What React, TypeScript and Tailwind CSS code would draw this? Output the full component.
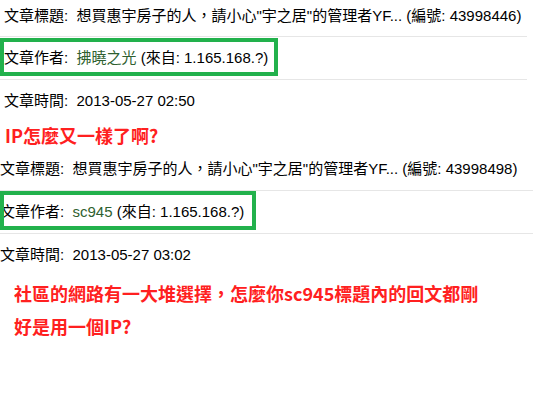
import React from "react";

const font = { fontFamily: '"Liberation Sans", "Noto Sans CJK TC", sans-serif' };

function Block({
  id,
  author,
  time,
  pad,
  width,
  boxW,
  boxTop,
  boxH,
  first,
}: {
  id: string;
  author: string;
  time: string;
  pad: string;
  width: string;
  boxW: string;
  boxTop: string;
  boxH: string;
  first: boolean;
}) {
  return (
    <div className={width}>
      <div
        className={`flex items-center border-b border-[#e6e6e6] ${pad} ${
          first ? "h-[37px] pb-1" : "h-[43px]"
        }`}
      >
        <span>
          文章標題:{"\u00a0\u00a0"}想買惠宇房子的人，請小心"宇之居"的管理者YF... (編號: {id})
        </span>
      </div>
      <div className={`relative flex h-[43px] items-center border-b border-[#e6e6e6] ${pad}`}>
        <span>
          文章作者:{"\u00a0\u00a0"}
          <span className="text-[#2f5f2f]">{author}</span> (來自: 1.165.168.?)
        </span>
        <div
          className={`pointer-events-none absolute left-0 border-4 border-[#22b14c] ${boxW} ${boxTop} ${boxH}`}
        />
      </div>
      <div className={`flex h-[43px] items-center ${pad}`}>
        <span>文章時間:{"\u00a0\u00a0"}{time}</span>
      </div>
    </div>
  );
}

export default function App() {
  const red = {
    fontFamily: '"Noto Sans CJK TC", "Noto Sans", sans-serif',
  };
  return (
    <div className="h-[407px] w-[536px] overflow-hidden bg-white text-[15px] text-black" style={font}>
      <Block
        id="43998446"
        author="拂曉之光"
        time="2013-05-27 02:50"
        pad="pl-1"
        width="w-[527px]"
        boxW="w-[278px]"
        boxTop="top-[1px]"
        boxH="h-[38px]"
        first
      />
      <div className="h-[25px] whitespace-nowrap pl-[5px] text-[18px] font-bold leading-[25px] text-[#ff2020]" style={red}>
        IP怎麼又一樣了啊?
      </div>
      <Block
        id="43998498"
        author="sc945"
        time="2013-05-27 03:02"
        pad="pl-0"
        width="w-[533px]"
        boxW="w-[256px]"
        boxTop="top-0"
        boxH="h-[39px]"
        first={false}
      />
      <div className="whitespace-nowrap pl-[14px] text-[18px] font-bold leading-[33px] text-[#ff2020]" style={red}>
        社區的網路有一大堆選擇，怎麼你sc945標題內的回文都剛
        <br />
        好是用一個IP?
      </div>
    </div>
  );
}
